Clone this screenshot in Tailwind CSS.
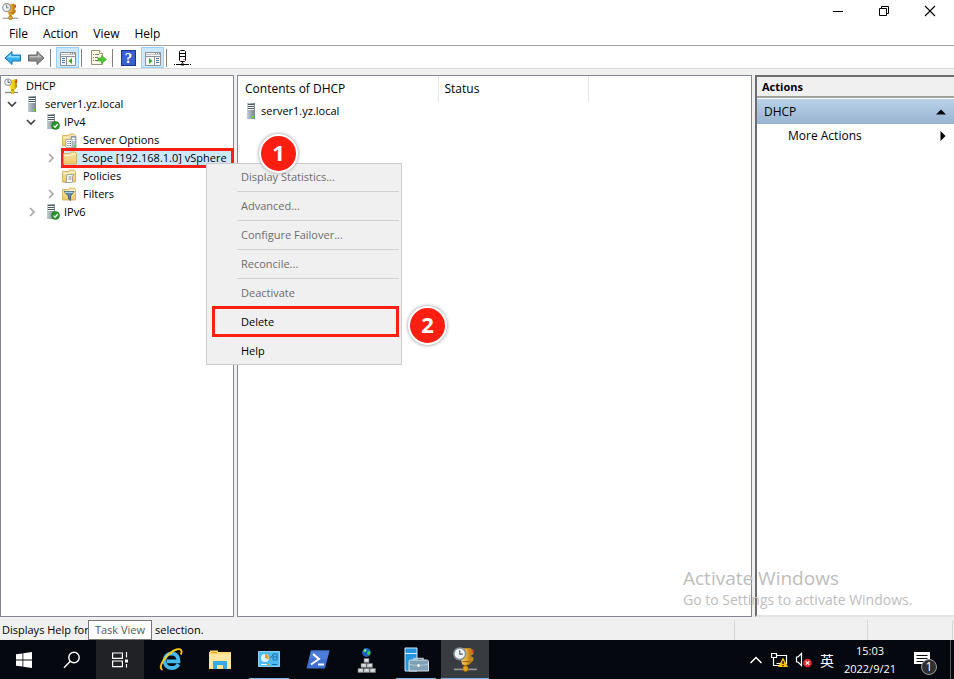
<!DOCTYPE html>
<html lang="en">
<head>
<meta charset="utf-8">
<meta name="viewport" content="width=device-width, initial-scale=1">
<title>DHCP</title>
<script src="https://cdn.jsdelivr.net/npm/@tailwindcss/browser@4"></script>
</head>
<body class="relative flex h-screen flex-col overflow-hidden bg-[#f0f0f0] font-['Open_Sans','Noto_Sans',sans-serif] text-[12px] leading-[18px] text-black">

<!-- Shared icon symbols -->
<svg width="0" height="0" class="absolute" aria-hidden="true">
  <defs>
    <linearGradient id="gold" x1="0" x2="1"><stop offset="0" stop-color="#f6cf6a"/><stop offset=".5" stop-color="#e3a52c"/><stop offset="1" stop-color="#a86c12"/></linearGradient>
    <linearGradient id="yellow" x1="0" x2="1"><stop offset="0" stop-color="#fff04a"/><stop offset=".6" stop-color="#e8c80c"/><stop offset="1" stop-color="#8a7500"/></linearGradient>
    <linearGradient id="steel" x1="0" x2="1"><stop offset="0" stop-color="#c3ccd0"/><stop offset="1" stop-color="#77858c"/></linearGradient>
    <linearGradient id="manila" x1="0" x2="0" y1="0" y2="1"><stop offset="0" stop-color="#fbe7a8"/><stop offset="1" stop-color="#edc766"/></linearGradient>
    <symbol id="dhcp" viewBox="0 0 24 24">
      <path d="M1 21.500h22" stroke="#8f989e" stroke-width="1.600"/>
      <rect x="10.500" y="16" width="3" height="5" fill="#b37a1a"/>
      <path d="M8 1.500l9-.5 1.500 2.500v3l-1 2 1 2v3l-3 3.500H9L8 14z" fill="url(#gold)"/>
      <path d="M17 2l2.500 1v4L17.500 8zM17.500 9l2 1v3l-2 2z" fill="#c98a1c"/>
      <path d="M18 2.500h1.800v3H18z" fill="#d8412c"/>
      <path d="M9 14h7" stroke="#91600f"/>
      <circle cx="12" cy="20.800" r="2.700" fill="#e2a21e" stroke="#855a0c" stroke-width=".7"/>
      <circle cx="6.500" cy="6.500" r="5.600" fill="#eef2f5" stroke="#89939b" stroke-width="1.500"/>
      <path d="M6.500 3v3.800H9.500" fill="none" stroke="#4d5a64" stroke-width="1.100"/>
    </symbol>
    <symbol id="dhcp-root" viewBox="0 0 16 16">
      <path d="M1 14.500h13" stroke="#79858c" stroke-width="1.200"/>
      <path d="M5 2.500L12 1l1.500 2-1 2 .8 3.500L10.500 12H7L5 9z" fill="url(#yellow)"/>
      <path d="M12.500 1.200v2.300M11 3.500l2 1.500" stroke="#d44b1c" stroke-width="1.200"/>
      <rect x="7.500" y="11" width="2" height="3" fill="#b39600"/>
      <circle cx="8.500" cy="14" r="1.800" fill="#ecd000" stroke="#8a7500" stroke-width=".5"/>
      <circle cx="4" cy="4.200" r="3.300" fill="#f2f4f6" stroke="#858d94"/>
      <path d="M4 2v2.400h2" fill="none" stroke="#414a52" stroke-width=".8"/>
    </symbol>
    <symbol id="server" viewBox="0 0 16 16">
      <path d="M4 0h8v16H4z" fill="url(#steel)"/>
      <path d="M5 1h6v6H5z" fill="#f4f7f8"/>
      <path d="M5 1.500h6M5 3.500h6M5 5.500h6" stroke="#4e5a61"/>
      <rect x="9" y="13" width="2" height="2" fill="#55e619"/>
    </symbol>
    <symbol id="server-ok" viewBox="0 0 16 16">
      <path d="M2 0h8v15H2z" fill="url(#steel)"/>
      <path d="M3 1h6v6H3z" fill="#f4f7f8"/>
      <path d="M3 1.500h6M3 3.500h6M3 5.500h6" stroke="#4e5a61"/>
      <circle cx="10.500" cy="11.500" r="4" fill="#27962a" stroke="#156b1a" stroke-width=".5"/>
      <path d="M8.500 11.600l1.600 1.600 2.700-3.200" fill="none" stroke="#fff" stroke-width="1.300"/>
    </symbol>
    <symbol id="folder" viewBox="0 0 16 16">
      <path d="M1.500 3.500h6l1-1.500H13l1.500 1.500v10.500h-13z" fill="url(#manila)" stroke="#d2a84c" stroke-width=".8"/>
      <path d="M2 5.500h6.500l1-1.200H14" fill="none" stroke="#fff5d2"/>
    </symbol>
    <symbol id="pane" viewBox="0 0 16 14">
      <path d="M.5.500h15v13H.500z" fill="#f6f6f6" stroke="#8e9295"/>
      <path d="M1 .500h14v2H1z" fill="#8e9295"/>
      <path d="M1 1.500h9m1 0h1m1 0h1" stroke="#f4f4f4"/>
      <path d="M1 4.500h14" stroke="#8e9295"/>
    </symbol>
    <symbol id="globe" viewBox="0 0 8 8"><circle cx="4" cy="4" r="3.900" fill="#1b62c4"/><path d="M2 1l2 .5L3.500 3 2 4 1 3zM5 3l2-.5.5 2L6 6.500 4.500 5z" fill="#3fd03a"/><circle cx="3" cy="2" r="1" fill="#c9f2ff" opacity=".7"/></symbol>
  </defs>
</svg>

<header>
  <!-- Title bar -->
  <div class="flex h-[23px] items-start bg-white pl-[2px]">
    <svg class="mt-[3px] size-[17px]"><use href="#dhcp"/></svg>
    <h1 class="mt-[2px] ml-1 flex-1 font-normal">DHCP</h1>
    <button aria-label="Minimize" class="flex h-[21px] w-[46px] items-center justify-center"><svg width="12" height="12"><path d="M1 6.500h10" stroke="#000"/></svg></button>
    <button aria-label="Restore" class="flex h-[21px] w-[45px] items-center justify-center"><svg width="12" height="12" fill="none" stroke="#000"><path d="M1.500 3.500h7v7h-7zM3.500 3.500v-2h7v7h-2"/></svg></button>
    <button aria-label="Close" class="mr-px flex h-[21px] w-[47px] items-center justify-center"><svg width="12" height="12"><path d="M1 1l10 10M11 1L1 11" stroke="#000" stroke-width="1.100"/></svg></button>
  </div>
  <!-- Menu bar -->
  <nav class="flex h-[23px] items-center gap-[15px] border-b border-[#a0a0a0] bg-white pl-[9px]">
    <button>File</button><button>Action</button><button>View</button><button>Help</button>
  </nav>
  <!-- Toolbar -->
  <div role="toolbar" aria-label="Tools" class="flex h-[23px] items-center border-b border-[#d9d9d9] bg-white pt-px pl-1">
    <button aria-label="Back" class="w-[18px]"><svg width="18" height="16"><path d="M1 8l7-6.500V5h8.500v6H8v3.500z" fill="#35b1ee" stroke="#1b6fae"/><path d="M3 7.500l4-3.700V6h8.500v1.500z" fill="#8bdcff"/></svg></button>
    <button aria-label="Forward" class="ml-[5px] w-[18px]"><svg width="18" height="16"><path d="M17 8l-7-6.500V5H1.500v6H10v3.500z" fill="#8c8c8c" stroke="#626262"/><path d="M15 7.500l-4-3.700V6H2.500v1.500z" fill="#bcbcbc"/></svg></button>
    <span class="ml-[5px] h-[18px] w-px bg-[#808080]"></span>
    <button aria-label="Show or hide console tree" class="ml-[5px] flex h-[21px] w-[23px] items-end justify-center border border-[#99d1ff] bg-[#cce8ff] pb-px">
      <svg width="16" height="14"><use href="#pane"/><path d="M6.500 5v8" stroke="#8e9295"/><path d="M2 6.500h3M2 8.500h3M2 10.500h3" stroke="#4677a8"/><path d="M12 6v6L8.500 9z" fill="#39aa18"/></svg>
    </button>
    <span class="ml-[2px] h-[18px] w-px bg-[#808080]"></span>
    <button aria-label="Export list" class="ml-2 w-[17px]"><svg width="17" height="17"><path d="M1.500 1.500h8l3 3v11h-11z" fill="#fdf8df" stroke="#97917c"/><path d="M9.500 1.500v3h3" fill="#fff" stroke="#97917c"/><path d="M3 5.500h1m1 0h4M3 8.500h1m1 0h3M3 11.500h1m1 0h4" stroke="#777"/><path d="M8 9h3.500V6.500l5 4-5 4V12H8z" fill="#4cc92e" stroke="#2e9e1d" stroke-width=".6"/></svg></button>
    <span class="ml-[5px] h-[18px] w-px bg-[#808080]"></span>
    <button aria-label="Help topics" class="ml-2 flex h-4 w-[15px] items-center justify-center border border-[#17358c] bg-[#3a60cd] font-['Liberation_Serif',serif] text-[15px] leading-[14px] font-bold text-white">?</button>
    <button aria-label="Show or hide action pane" class="ml-[5px] flex h-[21px] w-[23px] items-end justify-center border border-[#99d1ff] bg-[#cce8ff] pb-px">
      <svg width="16" height="14"><use href="#pane"/><path d="M9.500 5v8" stroke="#8e9295"/><path d="M11 6.500h3M11 8.500h3M11 10.500h3" stroke="#4677a8"/><path d="M4 6v6l3.500-3z" fill="#39aa18"/></svg>
    </button>
    <span class="ml-[2px] h-[18px] w-px bg-[#808080]"></span>
    <button aria-label="Add server" class="ml-[7px] w-[17px]"><svg width="17" height="17"><path d="M5.500 2.500l1-1h4l1 1v9l-1 1h-4l-1-1z" fill="#fff" stroke="#000"/><path d="M6 4.500h5M6 7.500h5" stroke="#000"/><path d="M9.500 10.500h1" stroke="#f00"/><path d="M8.500 12v2" stroke="#000"/><path d="M0 15.500h1m1 0h13m1 0h1" stroke="#000"/><path d="M7 14.500h3v2H7z"/></svg></button>
  </div>
</header>

<main class="grid min-h-0 flex-1 grid-cols-[234px_minmax(0,1fr)_199px] gap-[3px] pt-[6px]">
  <!-- Console tree -->
  <nav aria-label="Console tree" class="border border-[#828790] bg-white pt-[1px] text-[11px]">
    <ul>
      <li class="flex h-[18px] items-center pl-[3px]"><svg class="mr-[6px] size-4"><use href="#dhcp-root"/></svg>DHCP</li>
      <li class="flex h-[18px] items-center pl-[6px]"><button aria-label="Collapse server1.yz.local" class="mr-[7px]"><svg width="10" height="8"><path d="M1 2l4 4 4-4" fill="none" stroke="#404040" stroke-width="1.600"/></svg></button><svg class="mr-[5px] size-4"><use href="#server"/></svg>server1.yz.local</li>
      <li class="flex h-[18px] items-center pl-[25px]"><button aria-label="Collapse IPv4" class="mr-[9px]"><svg width="10" height="8"><path d="M1 2l4 4 4-4" fill="none" stroke="#404040" stroke-width="1.600"/></svg></button><svg class="mr-[3px] size-4"><use href="#server-ok"/></svg>IPv4</li>
      <li class="flex h-[18px] items-center pl-[60px]"><svg class="mr-[6px] size-4"><use href="#folder"/><path d="M10 4.500h5v11h-5z" fill="#b5c0c6" stroke="#738089" stroke-width=".7"/><path d="M11 6.500h3M11 8.500h3" stroke="#fff"/><path d="M5 7.500h6v8H5z" fill="#fff" stroke="#8d98a0" stroke-width=".7"/><path d="M6.500 9.500h1m1 0h1.500M6.500 11.500h1m1 0h1.500M6.500 13.500h1m1 0h1.500" stroke="#4c6e9c"/><path d="M13 13h1.500v1.500H13z" fill="#46d416"/></svg>Server Options</li>
      <li class="flex h-[18px] items-center pl-[46px]"><button aria-label="Expand scope" class="mr-[6px]"><svg width="8" height="10"><path d="M2 1l4 4-4 4" fill="none" stroke="#a6a6a6" stroke-width="1.600"/></svg></button><span class="-my-px -mr-px flex h-5 flex-1 items-center border-[3px] border-[#ff1f12] bg-[#cce8ff] whitespace-nowrap"><svg class="mr-[4px] -ml-[2px] size-4 shrink-0"><use href="#folder"/></svg>Scope [192.168.1.0] vSphere</span></li>
      <li class="flex h-[18px] items-center pl-[60px]"><svg class="mr-[6px] size-4"><use href="#folder"/><path d="M6 6.500h7l-1.500 2v5c0 1-1 1-1.500 1H4c1.500 0 1.500-1 1.500-2V8z" fill="#f4f4f4" stroke="#8e8f91" stroke-width=".8"/><path d="M7.500 9h3M7.500 11h3" stroke="#777" stroke-width=".8"/></svg>Policies</li>
      <li class="flex h-[18px] items-center pl-[46px]"><button aria-label="Expand Filters" class="mr-[6px]"><svg width="8" height="10"><path d="M2 1l4 4-4 4" fill="none" stroke="#a6a6a6" stroke-width="1.600"/></svg></button><svg class="mr-[6px] size-4"><use href="#folder"/><path d="M3 5.500h10L9.500 10v4.500l-2-1.500v-3z" fill="#5d87ac" stroke="#32587b" stroke-width=".8"/><path d="M4 6.300h8" stroke="#c6e0f3"/></svg>Filters</li>
      <li class="flex h-[18px] items-center pl-[27px]"><button aria-label="Expand IPv6" class="mr-[9px]"><svg width="8" height="10"><path d="M2 1l4 4-4 4" fill="none" stroke="#a6a6a6" stroke-width="1.600"/></svg></button><svg class="mr-[3px] size-4"><use href="#server-ok"/></svg>IPv6</li>
    </ul>
  </nav>

  <!-- Contents list -->
  <section aria-label="Contents" class="border border-[#828790] bg-white">
    <table class="w-full table-fixed border-collapse text-left">
      <thead><tr class="h-[26px]">
        <th class="w-[200px] border-r border-[#e5e5e5] pl-[7px] font-normal">Contents of DHCP</th>
        <th class="w-[150px] border-r border-[#e5e5e5] pl-[6px] font-normal">Status</th>
        <td></td>
      </tr></thead>
      <tbody><tr><td class="h-[18px] pl-[5px] text-[11px]"><span class="flex items-center gap-[2px]"><svg class="size-4"><use href="#server"/></svg>server1.yz.local</span></td><td></td><td></td></tr></tbody>
    </table>
  </section>

  <!-- Actions pane -->
  <aside class="border-2 border-t-[#6d6d6d] border-r-0 border-b-[#e3e3e3] border-l-[#6d6d6d] bg-white">
    <h2 class="h-[21px] border-b-2 border-[#a0a0a0] bg-[#f0f0f0] pt-px pl-[5px] text-[11px] font-bold">Actions</h2>
    <button class="mt-px flex h-[25px] w-full items-center justify-between bg-linear-to-b from-[#b9d1ea] to-[#99b4d1] pr-2 pl-[7px]">DHCP<svg width="10" height="6"><path d="M0 5.500L5 .500l5 5z"/></svg></button>
    <button class="flex h-[23px] w-full items-center justify-between pr-2 pl-[31px]">More Actions<svg width="6" height="10"><path d="M.5 0l5 5-5 5z"/></svg></button>
  </aside>
</main>

<!-- Status bar -->
<footer class="relative flex h-[23px] items-center pt-[2px] pl-[2px] text-[11px]">
  <p class="flex-1 whitespace-nowrap"><span class="inline-block w-[153px]">Displays Help for</span>selection.</p>
  <div class="h-5 w-[133px] border-l border-[#d7d7d7]"></div>
  <div class="mr-px h-5 w-[86px] border-x border-[#d7d7d7]"></div>
  <div role="tooltip" class="absolute top-[3px] left-[88px] flex h-5 w-16 items-center justify-center border border-[#767676] bg-white text-[#575757]">Task View</div>
</footer>

<!-- Taskbar -->
<div class="flex h-[39px] shrink-0 bg-[#05080e] text-white">
  <div class="mr-[3px] flex">
    <button aria-label="Start" class="flex w-12 items-center justify-center"><svg width="16" height="16" fill="#fff"><path d="M0 2.300L6.500 1.400v6.200H0zM7.300 1.300L16 0v7.600H7.300zM0 8.400h6.500v6.200L0 13.700zM7.300 8.400H16V16l-8.700-1.200z"/></svg></button>
    <button aria-label="Search" class="flex w-12 items-center justify-center"><svg width="18" height="18" fill="none" stroke="#fff" stroke-width="1.400"><circle cx="11" cy="6.500" r="5.200"/><path d="M7.300 10.200L1 16.700"/></svg></button>
    <button aria-label="Task View" class="flex w-12 items-center justify-center bg-[#202226]"><svg width="18" height="16" fill="none" stroke="#fff" stroke-width="1.200"><path d="M1.600 1h9.800v5.400H1.600zM1.600 9h9.800v5.600H1.600zM15.500 0v5.500M15.500 12v3.500"/><path d="M14 7.500h3v3h-3z" fill="#fff" stroke="none"/></svg></button>
  </div>
  <div class="flex gap-px">
    <button aria-label="Internet Explorer" class="flex w-12 items-center justify-center"><svg width="24" height="24" viewBox="0 0 24 24" fill="none"><path d="M19.500 16.200c-1.300 2.300-3.800 3.800-7 3.800-4.200 0-7-3-7-7.200s3-7.300 7.200-7.300 6.800 3 6.800 7.800H8" stroke="#45b9ef" stroke-width="3.800"/><path d="M7 9.500c1-2.600 3-4 5.700-4" stroke="#a9e9ff" stroke-width="1.500"/><path d="M3.500 22C-.500 20 3 12.500 9.500 6.500S22-.200 22.500 3c.2 1-.1 2.200-.8 3.500" stroke="#f6c51d" stroke-width="1.900"/></svg></button>
    <button aria-label="File Explorer" class="flex w-12 items-center justify-center"><svg width="22" height="20"><path d="M0 2h1V.500h8V2h13v17H0z" fill="#ffd86e"/><path d="M0 4h22v14H0z" fill="#ffe7a0"/><path d="M2 2.500h6" stroke="#e59e2a"/><path d="M4 11h14v8h-4v-4H8v4H4z" fill="#35aae4"/></svg></button>
    <button aria-label="Control Panel" class="relative flex w-12 items-center justify-center after:absolute after:inset-x-1 after:bottom-0 after:h-px after:bg-[#76b9ed]"><svg width="22" height="17"><path d="M.5.500h21v15H.500z" fill="#4ebcf1" stroke="#8ad4f8"/><circle cx="7" cy="7" r="4" fill="#dff3fd"/><path d="M7 7V3a4 4 0 0 1 3.500 5.500z" fill="#f09c20"/><path d="M15 3h4v6h-4zM12 7l3-3M15 6h4" fill="none" stroke="#1d72a8"/><path d="M3 13.500h6" stroke="#fff"/><path d="M10 13.500h2" stroke="#f4b022"/><path d="M14 13.500h5" stroke="#136fa9"/></svg></button>
    <button aria-label="PowerShell" class="flex w-12 items-center justify-center"><svg width="24" height="19"><path d="M5 .500h18.500l-4.500 18H.500z" fill="#3f6fd1"/><path d="M5 .500h18.500L21 9H3z" fill="#5382dd" opacity=".7"/><path d="M7 4l6 5-8 5.500M12 14.500h6" fill="none" stroke="#fff" stroke-width="2"/></svg></button>
    <button aria-label="Network manager" class="flex w-12 items-center justify-center"><svg width="20" height="26"><use href="#globe" x="5" y="1" width="9" height="9"/><g fill="#c6c9cc" stroke="#777b80" stroke-width=".5"><path d="M7 11.500h5v4H7zM4 16.500h5.500v4H4zM10 16.500h5.500v4H10zM1 21.500h5.500v4H1zM7 21.500h5.500v4H7zM13 21.500h5.500v4H13z"/></g><path d="M8 13h3M5.500 18h2M12 18h2M2.500 23h2M8.500 23h2M14.500 23h2" stroke="#fff"/></svg></button>
    <button aria-label="Server Manager" class="relative flex w-12 items-center justify-center after:absolute after:inset-x-1 after:bottom-0 after:h-px after:bg-[#76b9ed]"><svg width="25" height="26"><path d="M1 1h12v23H1z" fill="#2594df" stroke="#c9e8fb"/><path d="M1 6.500h12" stroke="#d7efff"/><path d="M10 14v-2.500h9V14" fill="none" stroke="#b5c8d4" stroke-width="1.500"/><path d="M5 14.500c0-1 .5-1.500 1.500-1.500h16c1 0 2 .5 2 1.500v9.500H5z" fill="#7fa0b4" stroke="#d6e2ea"/><path d="M5 17c6 2 13 2 19.500 0" fill="none" stroke="#b4c8d4"/><path d="M13.500 17h2v3h-2z" fill="#e9f1f5"/></svg></button>
    <button aria-label="DHCP" class="relative flex w-12 items-center justify-center bg-[#383b40] after:absolute after:inset-x-0 after:bottom-0 after:h-px after:bg-[#76b9ed]"><svg class="size-[25px]"><use href="#dhcp"/></svg></button>
  </div>
  <div class="ml-auto flex items-center">
    <button aria-label="Show hidden icons" class="w-6"><svg class="mx-auto" width="14" height="8"><path d="M1.500 7L7 1.500 12.500 7" fill="none" stroke="#fff" stroke-width="1.500"/></svg></button>
    <button aria-label="Network" class="w-6"><svg class="mx-auto" width="18" height="16"><path d="M5.500 3.500h10v8h-10M.5 1.500h5v4h-5zM2.500 5.500v8M2 13.500h7" fill="none" stroke="#fff" stroke-width="1.200"/><path d="M12 5.500l5 9.500H7z" fill="#fdc10f"/><path d="M12 9v3M12 13v1.200" stroke="#000" stroke-width="1.300"/></svg></button>
    <button aria-label="Volume muted" class="w-6"><svg class="mx-auto" width="18" height="16"><path d="M1.500 5h1.500l3.500-3.500v12L3 10H1.500z" fill="none" stroke="#fff" stroke-width="1.200"/><circle cx="12.500" cy="11" r="4.300" fill="#de2a33"/><path d="M10.800 9.300l3.400 3.400M14.200 9.300l-3.400 3.400" stroke="#fff" stroke-width="1.200"/></svg></button>
    <button lang="zh" class="w-[22px] font-['Noto_Sans_CJK_SC',sans-serif] text-[14px]">英</button>
    <time class="w-16 text-center text-[11px] leading-[18px]" datetime="2022-09-21T15:03">15:03<br>2022/9/21</time>
    <button aria-label="Notifications, 1 new" class="relative h-[39px] w-10"><svg class="mx-auto" width="18" height="18"><path d="M1 1h16v12h-4v4l-4-4H1z" fill="#fff"/><path d="M3.500 4.500h11M3.500 7.500h11M3.500 10.500h7" stroke="#080b11"/></svg><span class="absolute top-[19px] left-[19px] flex size-4 items-center justify-center rounded-full border border-[#9b9b9b] bg-[#2d2f32] text-[12px] leading-3">1</span></button>
    <span class="ml-2 h-[39px] w-1 border-l border-[#54575b]"></span>
  </div>
</div>

<!-- Context menu -->
<div role="menu" class="absolute top-[163px] left-[206px] flex w-[196px] flex-col border border-[#ccc] bg-[#f0f0f0] p-[2px] text-[11px]">
  <button role="menuitem" disabled class="h-[22px] pl-8 text-left text-[#6d6d6d]">Display Statistics...</button>
  <hr class="my-[3px] ml-7 border-[#d0d0d0]">
  <button role="menuitem" disabled class="h-[22px] pl-8 text-left text-[#6d6d6d]">Advanced...</button>
  <hr class="my-[3px] ml-7 border-[#d0d0d0]">
  <button role="menuitem" disabled class="h-[22px] pl-8 text-left text-[#6d6d6d]">Configure Failover...</button>
  <hr class="my-[3px] ml-7 border-[#d0d0d0]">
  <button role="menuitem" disabled class="h-[22px] pl-8 text-left text-[#6d6d6d]">Reconcile...</button>
  <hr class="my-[3px] ml-7 border-[#d0d0d0]">
  <button role="menuitem" disabled class="h-[22px] pl-8 text-left text-[#6d6d6d]">Deactivate</button>
  <button role="menuitem" class="my-[2px] ml-[3px] h-[31px] border-[3px] border-[#ff1f12] pl-[26px] text-left">Delete</button>
  <button role="menuitem" class="mt-px h-[22px] pl-8 text-left">Help</button>
</div>

<!-- Step markers -->
<span class="absolute top-[134px] left-[259px] flex size-[39px] items-center justify-center rounded-full border-2 border-white bg-[#ff1f12] pb-[3px] text-[22px] leading-none font-bold text-white shadow-[0_0_3px_1px_#bbb]">1</span>
<span class="absolute top-[306px] left-[408px] flex size-[39px] items-center justify-center rounded-full border-2 border-white bg-[#ff1f12] pb-[3px] text-[22px] leading-none font-bold text-white shadow-[0_0_3px_1px_#bbb]">2</span>

<!-- Activation watermark -->
<div class="pointer-events-none absolute right-[35px] bottom-[69px] w-[236px] whitespace-nowrap text-[#bdbdbd]">
  <p class="text-[19px] leading-6">Activate Windows</p>
  <p class="text-[14px] leading-5">Go to Settings to activate Windows.</p>
</div>
</body>
</html>
